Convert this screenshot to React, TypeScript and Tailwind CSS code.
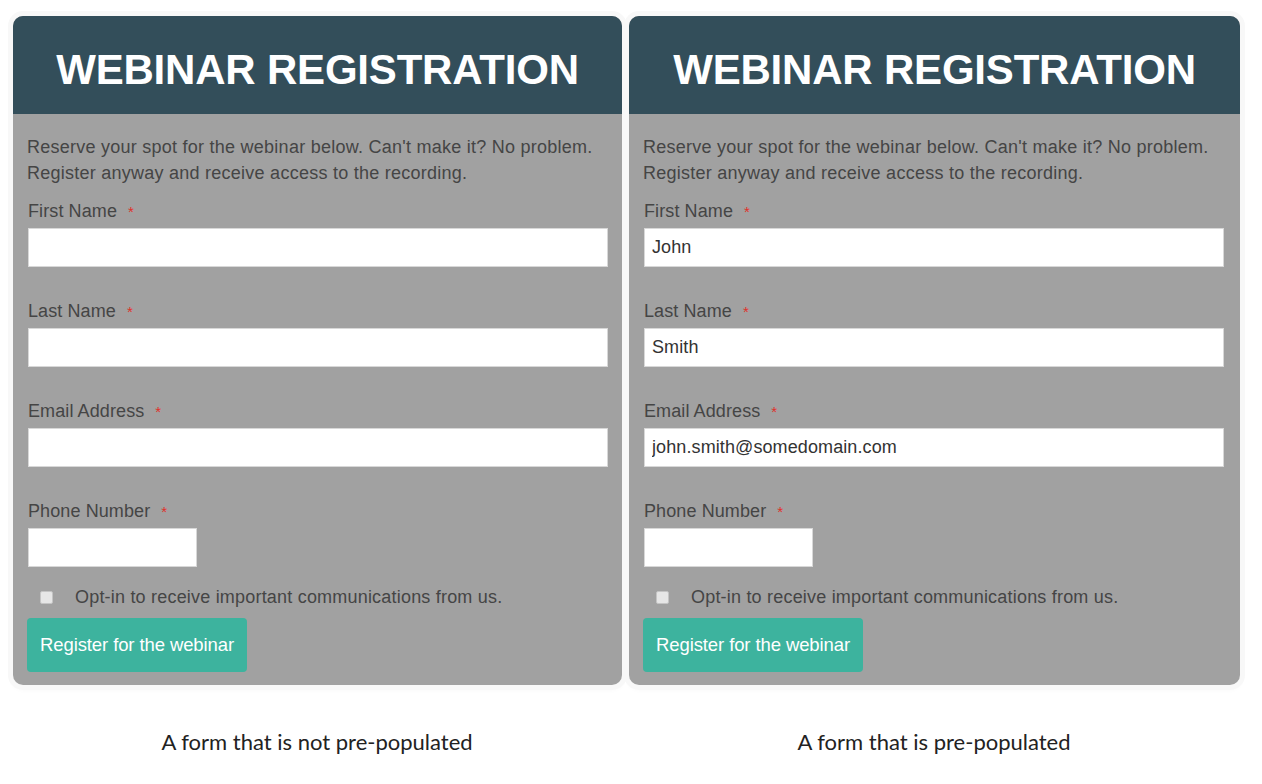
import React from "react";

type Field = { label: string; value: string; short?: boolean };

const emptyFields: Field[] = [
  { label: "First Name", value: "" },
  { label: "Last Name", value: "" },
  { label: "Email Address", value: "" },
  { label: "Phone Number", value: "", short: true },
];

const filledFields: Field[] = [
  { label: "First Name", value: "John" },
  { label: "Last Name", value: "Smith" },
  { label: "Email Address", value: "john.smith@somedomain.com" },
  { label: "Phone Number", value: "", short: true },
];

function RegistrationCard({ fields, width }: { fields: Field[]; width: string }) {
  return (
    <div className={`${width} rounded-[10px] overflow-hidden bg-[#a1a1a1] shadow-[0_0_0_5px_#f8f8f8,0_4px_6px_rgba(0,0,0,0.04)]`}>
      {/* header */}
      <div className="h-[98px] bg-[#334e5a] flex items-center justify-center">
        <h1 className="text-white font-bold text-[42px] leading-none tracking-[-0.2px] mt-[10px]">
          WEBINAR REGISTRATION
        </h1>
      </div>
      <div className="px-[14px] pt-[20px] pb-[13px] text-[#454545]">
        <p className="text-[18px] leading-[26px] tracking-[0.25px]">
          Reserve your spot for the webinar below. Can't make it? No problem.
          <br />
          Register anyway and receive access to the recording.
        </p>
        <div className="mt-[15px] flex flex-col gap-[34px]">
          {fields.map((f) => (
            <div key={f.label} className="flex flex-col">
              <label className="h-[20px] flex items-center text-[18px] leading-[20px] pl-[1px] tracking-[0.1px]">
                {f.label}
                <span className="text-[#e0302a] ml-[11px] text-[15px] leading-none">*</span>
              </label>
              <input
                readOnly
                value={f.value}
                className={`mt-[7px] h-[39px] bg-white border border-[#d8d8d8] px-[7px] text-[18px] tracking-[0.1px] text-[#333] outline-none ml-[1px] ${
                  f.short ? "w-[169px]" : "w-[580px]"
                }`}
              />
            </div>
          ))}
        </div>
        <div className="mt-[20px] flex items-center pl-[13px]">
          <span className="w-[13px] h-[13px] rounded-[2px] bg-[#e6e6e6] border border-[#c4c4c4]" />
          <span className="ml-[22px] text-[18px] leading-[20px] tracking-[0.2px]">
            Opt-in to receive important communications from us.
          </span>
        </div>
        <button className="mt-[11px] h-[54px] px-[13px] rounded-[4px] bg-[#3db39e] text-white text-[18.5px] tracking-[-0.1px]">
          Register for the webinar
        </button>
      </div>
    </div>
  );
}

export default function App() {
  return (
    <div
      className="w-[1262px] h-[784px] bg-white"
      style={{ fontFamily: '"Liberation Sans", Arial, sans-serif' }}
    >
      <div className="flex gap-[7px] pl-[13px] pt-[16px]">
        <RegistrationCard fields={emptyFields} width="w-[609px]" />
        <RegistrationCard fields={filledFields} width="w-[611px]" />
      </div>
      <div className="flex mt-[40px] text-[22px] text-[#222]" style={{ fontFamily: "Lato, sans-serif" }}>
        <div className="w-[634px] text-center">A form that is not pre-populated</div>
        <div className="w-[600px] text-center">A form that is pre-populated</div>
      </div>
    </div>
  );
}
